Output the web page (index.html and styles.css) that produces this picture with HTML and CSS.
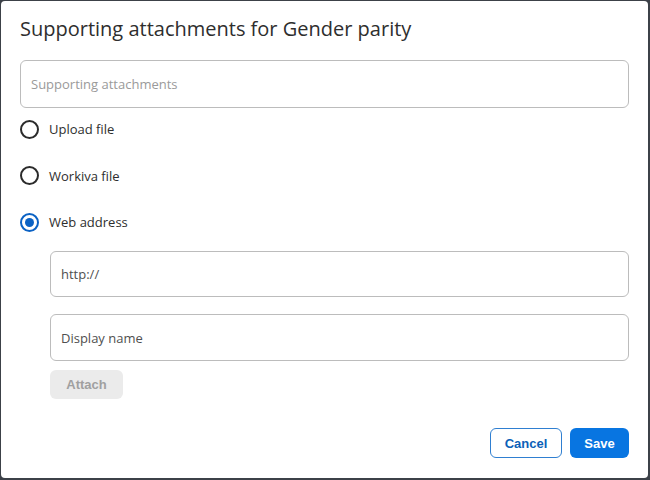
FILE: index.html
```html
<!DOCTYPE html>
<html>
<head>
<meta charset="utf-8">
<link rel="stylesheet" href="styles.css">
</head>
<body>
<div class="dialog">
  <h1 class="title">Supporting attachments for Gender parity</h1>
  <div class="field field-main"><span class="placeholder">Supporting attachments</span></div>
  <div class="options">
    <label class="option"><span class="radio"></span><span class="label">Upload file</span></label>
    <label class="option"><span class="radio"></span><span class="label">Workiva file</span></label>
    <label class="option"><span class="radio checked"></span><span class="label">Web address</span></label>
  </div>
  <div class="web">
    <div class="field field-url"><span class="value">http://</span></div>
    <div class="field field-name"><span class="value">Display name</span></div>
    <button class="btn btn-attach">Attach</button>
  </div>
  <div class="footer">
    <button class="btn btn-cancel">Cancel</button>
    <button class="btn btn-save">Save</button>
  </div>
</div>
</body>
</html>
```
FILE: styles.css
```css
html, body {
  margin: 0;
  padding: 0;
  height: 100%;
}
body {
  background: #3c4148;
  font-family: "Open Sans", "Liberation Sans", sans-serif;
  color: #333;
}
.dialog {
  box-sizing: border-box;
  margin: 1px 2px 0 1px;
  height: 477px;
  background: #fff;
  border-radius: 4px;
  padding: 14px 19px 0 19px;
  display: flex;
  flex-direction: column;
}
.title {
  margin: 0;
  font-size: 20px;
  line-height: 28px;
  font-weight: 400;
  color: #2e2e2e;
}
.field {
  box-sizing: border-box;
  border: 1px solid #bcbcbc;
  border-radius: 6px;
  display: flex;
  align-items: center;
  padding-left: 10px;
  font-size: 13px;
}
.field-main {
  margin-top: 17px;
  height: 48px;
}
.placeholder {
  color: #9a9a9a;
}
.value {
  color: #4f4f4f;
}
.options {
  margin-top: 9px;
  display: flex;
  flex-direction: column;
  gap: 22.5px;
}
.option {
  height: 24px;
  display: flex;
  align-items: center;
  gap: 10px;
}
.radio {
  box-sizing: border-box;
  width: 19px;
  height: 19px;
  border: 2px solid #2b2b2b;
  border-radius: 50%;
  display: flex;
  align-items: center;
  justify-content: center;
}
.radio.checked {
  border-color: #0b62c4;
}
.radio.checked::after {
  content: "";
  width: 9px;
  height: 9px;
  border-radius: 50%;
  background: #0b62c4;
}
.label {
  font-size: 13px;
  color: #2e2e2e;
}
.web {
  padding-left: 30px;
  display: flex;
  flex-direction: column;
  align-items: flex-start;
}
.web .field {
  width: 100%;
}
.field-url {
  margin-top: 17px;
  height: 46px;
}
.field-name {
  margin-top: 17px;
  height: 47px;
}
.btn {
  box-sizing: border-box;
  font-family: "Liberation Sans", Arial, sans-serif;
  font-weight: 700;
  font-size: 13px;
  border-radius: 6px;
  border: 1px solid transparent;
  padding: 0;
  cursor: pointer;
}
.btn-attach {
  margin-top: 9px;
  width: 73px;
  height: 29px;
  background: #ebebeb;
  color: #a0a0a0;
}
.footer {
  margin-top: 29px;
  display: flex;
  justify-content: flex-end;
  gap: 8px;
}
.btn-cancel {
  width: 72px;
  height: 30px;
  background: #fff;
  border-color: #2f7fd1;
  color: #0b5fb8;
}
.btn-save {
  width: 59px;
  height: 30px;
  background: #0875e1;
  color: #fff;
}
```
